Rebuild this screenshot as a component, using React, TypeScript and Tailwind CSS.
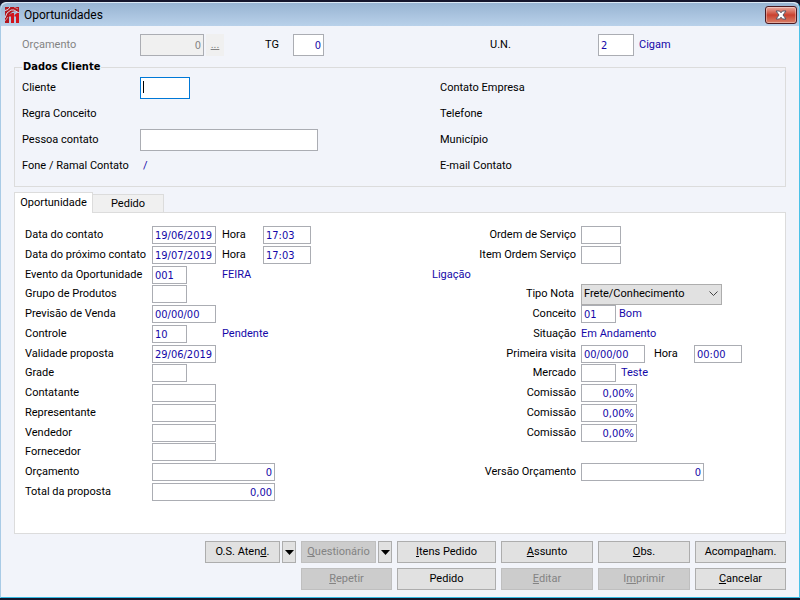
import * as React from "react"
import clsx from "clsx"

// ── Shared controls ───────────────────────────────────────────────────────────

interface TextBoxProps {
  id: string
  value?: string
  className?: string
  right?: boolean
  disabled?: boolean
  active?: boolean
}

function TextBox({ id, value = "", className, right, disabled, active }: TextBoxProps) {
  return (
    <input
      id={id}
      type="text"
      defaultValue={value}
      disabled={disabled}
      className={clsx(
        "shrink-0 border pt-px font-['DejaVu_Sans_Condensed'] outline-none focus:border-[#0078d7]",
        active ? "border-[#0078d7] caret-transparent" : "border-[#abadb3]",
        right ? "pr-0.5 text-right" : "pl-0.5",
        disabled ? "bg-[#f0f0f0] text-[#838383]" : "bg-white text-[#1408a8]",
        className
      )}
    />
  )
}

// Draws the letter after "&" underlined, as an access key.
function Mnemonic({ text }: { text: string }) {
  const at = text.indexOf("&")
  if (at < 0) return <>{text}</>
  return (
    <>
      {text.slice(0, at)}
      <u>{text[at + 1]}</u>
      {text.slice(at + 2)}
    </>
  )
}

interface PushButtonProps {
  text: string
  disabled?: boolean
  className?: string
}

function PushButton({ text, disabled, className }: PushButtonProps) {
  return (
    <button
      type="button"
      disabled={disabled}
      className={clsx(
        "h-[22px] border border-[#adadad] bg-[#e1e1e1] text-black disabled:border-[#bfbfbf] disabled:bg-[#cccccc] disabled:text-[#838383]",
        className
      )}
    >
      <Mnemonic text={text} />
    </button>
  )
}

function SplitButton({ text, disabled }: PushButtonProps) {
  return (
    <div className="flex gap-0.5">
      <PushButton text={text} disabled={disabled} className="flex-1" />
      <button
        type="button"
        aria-label="Mais opções"
        className="flex h-[22px] w-3.5 items-center justify-center border border-[#adadad] bg-[#e1e1e1]"
      >
        <svg width="9" height="5" viewBox="0 0 9 5" aria-hidden="true">
          <path d="M0 0h9L4.5 5z" fill="#000" />
        </svg>
      </button>
    </div>
  )
}

// ── Title bar ─────────────────────────────────────────────────────────────────

function TitleBar() {
  return (
    <header className="flex h-[23px] shrink-0 items-center rounded-t-md bg-linear-to-b from-[#98b4d2] to-[#b9d1ea] pl-1 pr-0.5">
      <svg width="14" height="16" viewBox="0 0 14 16" aria-hidden="true">
        <path d="M0 0h14v6l-4-2-3 1-3 3v8H0z" fill="#b3161d" />
        <path d="M0 3.5l3-1L5 0M0 11l2-5 4-3h3l5 3" stroke="#d4dcea" strokeWidth="1" fill="none" />
        <path d="M0 14l3-4M9 0l4 2" stroke="#d98c94" strokeWidth="1" fill="none" />
        <path d="M4 8l3-2h2v10H6V9.5H4zM9.500 8l2.500-2h2v10h-3V9.500H9.500z" fill="#d2141c" />
      </svg>
      <h1 className="ml-[5px] flex-1 font-[Roboto] text-xs text-black">Oportunidades</h1>
      <button
        type="button"
        aria-label="Fechar"
        className="flex h-[18px] w-8 items-center justify-center rounded-[3px] border border-[#4b1a22] bg-linear-to-b from-[#e9a99f] via-[#c9402f] via-50% to-[#d87e68] shadow-[inset_0_0_0_1px_rgba(255,255,255,0.35)]"
      >
        <svg width="12" height="10" viewBox="0 0 12 10" aria-hidden="true">
          <path
            d="M1 1h3.500L6 2.800 7.500 1H11L8 5l3 4H7.500L6 7.200 4.500 9H1l3-4z"
            fill="#fff"
            stroke="#555968"
            strokeWidth="1"
          />
        </svg>
      </button>
    </header>
  )
}

// ── Header fields and client data ─────────────────────────────────────────────

function HeaderFields() {
  return (
    <div className="flex h-[22px] items-center pl-2">
      <label htmlFor="orcamento" className="w-[118px] text-[#838383]">Orçamento</label>
      <TextBox id="orcamento" value="0" right disabled className="h-[22px] w-16" />
      <button type="button" disabled className="ml-0.5 h-[22px] w-[18px] bg-[#f0f0f0] text-[#838383] underline">
        ...
      </button>
      <label htmlFor="tg" className="ml-[41px] w-7">TG</label>
      <TextBox id="tg" value="0" right className="h-[22px] w-[31px]" />
      <label htmlFor="un" className="ml-[166px] w-[108px]">U.N.</label>
      <TextBox id="un" value="2" className="h-[22px] w-9" />
      <span className="ml-[5px] text-[#1408a8]">Cigam</span>
    </div>
  )
}

function ClientData() {
  return (
    <fieldset className="mt-1 min-w-0 border border-[#dcdcdc] pb-[7px] pl-[7px] pt-px">
      <legend className="px-px font-['DejaVu_Sans_Condensed'] font-bold">Dados Cliente</legend>
      <div className="grid grid-cols-[418px_1fr] auto-rows-[26px] items-center">
        <div className="flex items-center">
          <label htmlFor="cliente" className="w-[118px]">Cliente</label>
          <div className="relative">
            <TextBox id="cliente" active className="block h-[22px] w-[50px]" />
            <span className="absolute left-[3px] top-1 h-3 w-px bg-black" />
          </div>
        </div>
        <span>Contato Empresa</span>
        <span>Regra Conceito</span>
        <span>Telefone</span>
        <div className="flex items-center">
          <label htmlFor="pessoa" className="w-[118px]">Pessoa contato</label>
          <TextBox id="pessoa" className="h-[22px] w-[178px]" />
        </div>
        <span>Município</span>
        <div className="flex items-center">
          <span className="w-[121px]">Fone / Ramal Contato</span>
          <span className="text-[#1408a8]">/</span>
        </div>
        <span>E-mail Contato</span>
      </div>
    </fieldset>
  )
}

// ── Opportunity tab ───────────────────────────────────────────────────────────

interface FieldProps {
  id: string
  label: string
  value?: string
  width: string
  right?: boolean
  children?: React.ReactNode
}

function LeftField({ id, label, value, width, right, children }: FieldProps) {
  return (
    <div className="flex h-[18px] items-center">
      <label htmlFor={id} className="w-[127px] shrink-0 whitespace-nowrap">{label}</label>
      <div className={clsx("flex shrink-0", children ? "w-[70px]" : "")}>
        <TextBox id={id} value={value} right={right} className={clsx("h-[18px]", width)} />
      </div>
      {children}
    </div>
  )
}

function RightField({ id, label, value, width, right, children }: FieldProps) {
  return (
    <div className="flex h-[18px] items-center">
      <label htmlFor={id} className="mr-[5px] w-36 shrink-0 text-right">{label}</label>
      <TextBox id={id} value={value} right={right} className={clsx("h-[18px]", width)} />
      {children}
    </div>
  )
}

function HourField({ id, value, className }: { id: string; value: string; className: string }) {
  return (
    <>
      <label htmlFor={id} className={className}>Hora</label>
      <TextBox id={id} value={value} className="h-[18px] w-12" />
    </>
  )
}

function Info({ children, className }: { children: React.ReactNode; className?: string }) {
  return <span className={clsx("text-[#1408a8]", className)}>{children}</span>
}

function OpportunityForm() {
  return (
    <div className="grid flex-1 grid-cols-[407px_1fr] border border-[#dcdcdc] bg-white pb-8 pl-2.5 pt-[13px]">
      <div className="flex flex-col justify-between">
        <LeftField id="data-contato" label="Data do contato" value="19/06/2019" width="w-16">
          <HourField id="hora-contato" value="17:03" className="w-[41px]" />
        </LeftField>
        <LeftField id="data-proximo" label="Data do próximo contato" value="19/07/2019" width="w-16">
          <HourField id="hora-proximo" value="17:03" className="w-[41px]" />
        </LeftField>
        <LeftField id="evento" label="Evento da Oportunidade" value="001" width="w-[35px]">
          <Info>FEIRA</Info>
        </LeftField>
        <LeftField id="grupo" label="Grupo de Produtos" width="w-[35px]" />
        <LeftField id="previsao" label="Previsão de Venda" value="00/00/00" width="w-16" />
        <LeftField id="controle" label="Controle" value="10" width="w-[35px]">
          <Info>Pendente</Info>
        </LeftField>
        <LeftField id="validade" label="Validade proposta" value="29/06/2019" width="w-16" />
        <LeftField id="grade" label="Grade" width="w-[35px]" />
        <LeftField id="contatante" label="Contatante" width="w-16" />
        <LeftField id="representante" label="Representante" width="w-16" />
        <LeftField id="vendedor" label="Vendedor" width="w-16" />
        <LeftField id="fornecedor" label="Fornecedor" width="w-16" />
        <LeftField id="orcamento-valor" label="Orçamento" value="0" width="w-[123px]" right />
        <LeftField id="total" label="Total da proposta" value="0,00" width="w-[123px]" right />
      </div>

      <div className="flex flex-col justify-between">
        <RightField id="ordem" label="Ordem de Serviço" width="w-10" />
        <RightField id="item-ordem" label="Item Ordem Serviço" width="w-10" />
        <div className="flex h-[18px] items-center">
          <Info>Ligação</Info>
        </div>
        <div className="flex h-[18px] items-center">
          <label htmlFor="tipo-nota" className="mr-[7px] w-[142px] text-right">Tipo Nota</label>
          <div className="relative">
            <select
              id="tipo-nota"
              className="block h-[21px] w-[141px] appearance-none border border-[#adadad] bg-[#e1e1e1] pl-0.5 outline-none"
            >
              <option>Frete/Conhecimento</option>
            </select>
            <svg
              className="pointer-events-none absolute right-1 top-[7px]"
              width="9"
              height="6"
              viewBox="0 0 9 6"
              aria-hidden="true"
            >
              <path d="M.5 .5l4 4 4-4" stroke="#444" fill="none" />
            </svg>
          </div>
        </div>
        <RightField id="conceito" label="Conceito" value="01" width="w-[35px]">
          <Info className="ml-[3px]">Bom</Info>
        </RightField>
        <div className="flex h-[18px] items-center">
          <span className="mr-[5px] w-36 text-right">Situação</span>
          <Info>Em Andamento</Info>
        </div>
        <RightField id="visita" label="Primeira visita" value="00/00/00" width="w-16">
          <HourField id="hora-visita" value="00:00" className="ml-[9px] w-10" />
        </RightField>
        <RightField id="mercado" label="Mercado" width="w-[35px]">
          <Info className="ml-[5px]">Teste</Info>
        </RightField>
        <RightField id="comissao-1" label="Comissão" value="0,00%" width="w-14" right />
        <RightField id="comissao-2" label="Comissão" value="0,00%" width="w-14" right />
        <RightField id="comissao-3" label="Comissão" value="0,00%" width="w-14" right />
        <div className="h-[18px]" />
        <RightField id="versao" label="Versão Orçamento" value="0" width="w-[123px]" right />
        <div className="h-[18px]" />
      </div>
    </div>
  )
}

function Tabs() {
  return (
    <div role="tablist" className="relative -mb-px flex items-end">
      <button
        type="button"
        role="tab"
        aria-selected="true"
        className="h-[21px] w-[79px] border border-b-0 border-[#dcdcdc] bg-white"
      >
        Oportunidade
      </button>
      <button
        type="button"
        role="tab"
        aria-selected="false"
        className="h-[19px] w-[71px] border border-l-0 border-[#dcdcdc] bg-[#f0f0f0]"
      >
        Pedido
      </button>
    </div>
  )
}

// ── Footer ────────────────────────────────────────────────────────────────────

function Footer() {
  return (
    <footer className="mt-[7px] grid grid-cols-[91px_91px_99px_92px_92px_91px] gap-[5px] self-end">
      <SplitButton text="O.S. Aten&d." />
      <SplitButton text="&Questionário" disabled />
      <PushButton text="&Itens Pedido" />
      <PushButton text="&Assunto" />
      <PushButton text="&Obs." />
      <PushButton text="Acompa&nham." />
      <PushButton text="&Repetir" disabled className="col-start-2" />
      <PushButton text="Pedido" />
      <PushButton text="&Editar" disabled />
      <PushButton text="I&mprimir" disabled />
      <PushButton text="&Cancelar" />
    </footer>
  )
}

export default function App() {
  return (
    <div className="flex min-h-screen flex-col bg-[#15152b] pb-0.5 pt-0.5 font-[Roboto,'Liberation_Sans',sans-serif] text-[11px] leading-[14px] text-black">
      <div className="flex flex-1 flex-col rounded-t-md border border-b-[#35b8e0] border-l-[#a9cbe6] border-r-[#4cc2e8] border-t-[#dbe8f5] bg-[#f2f4fa]">
        <TitleBar />
        <main className="flex flex-1 flex-col px-[13px] pb-[7px] pt-2">
          <HeaderFields />
          <ClientData />
          <div className="mt-[5px] flex flex-1 flex-col">
            <Tabs />
            <OpportunityForm />
          </div>
          <Footer />
        </main>
      </div>
    </div>
  )
}
